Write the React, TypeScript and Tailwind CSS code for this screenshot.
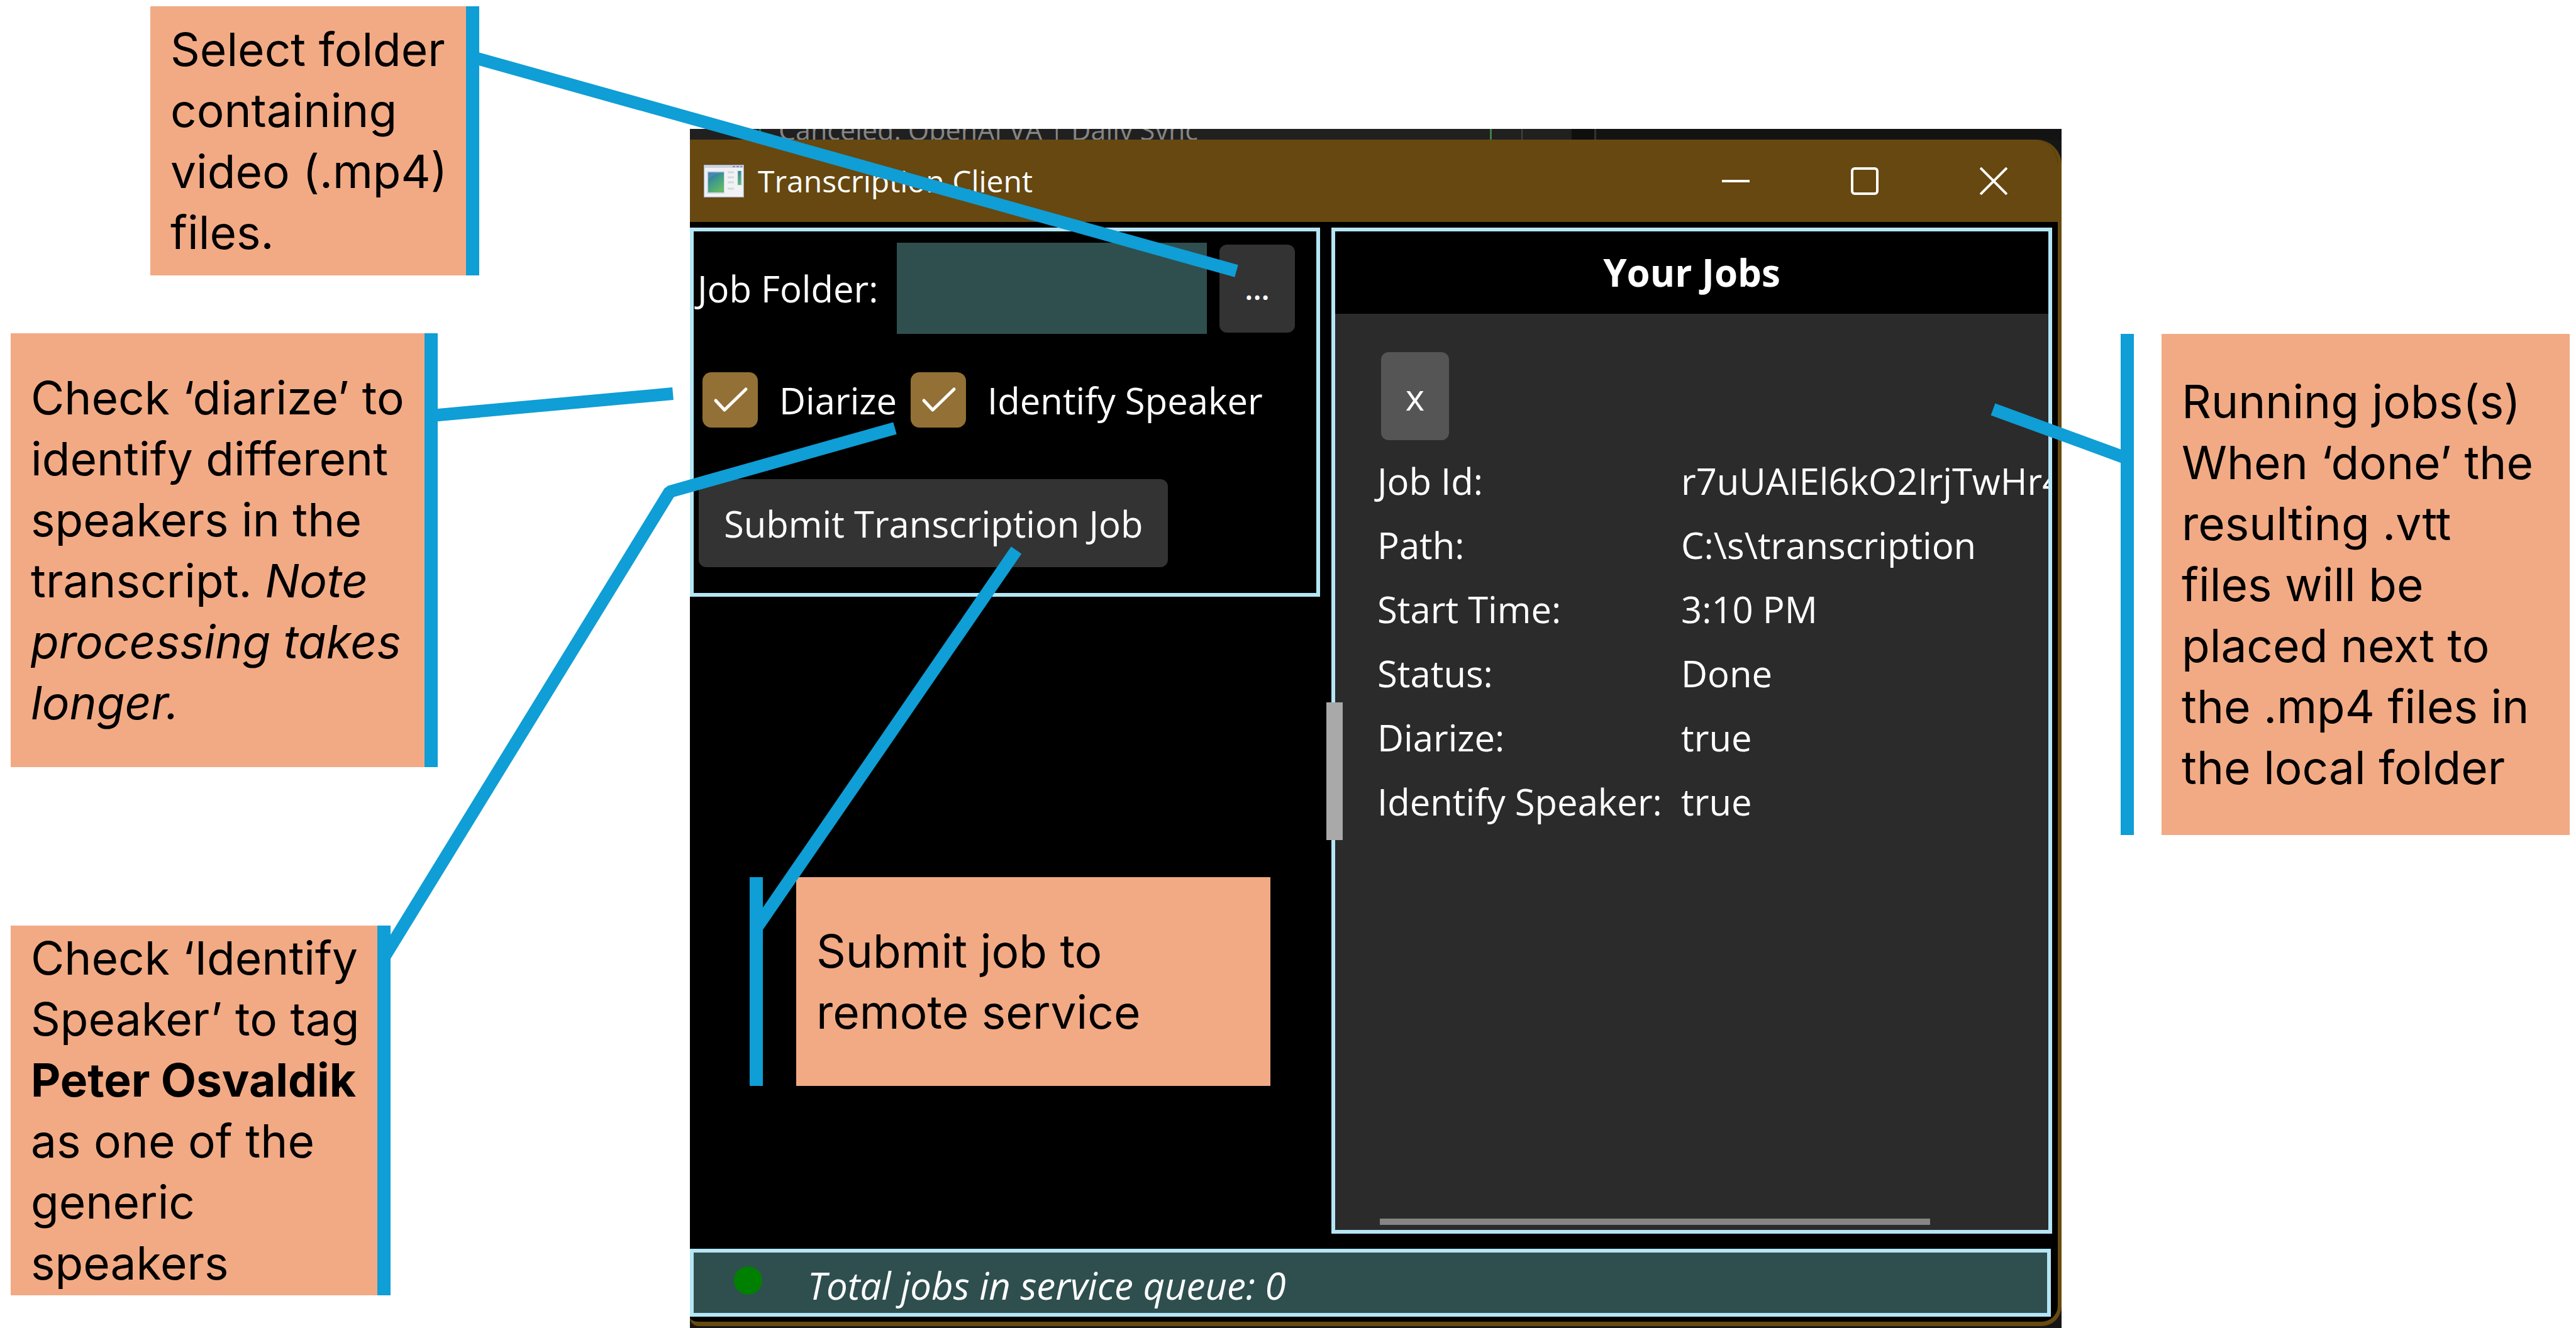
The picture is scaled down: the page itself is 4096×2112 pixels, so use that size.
import type { ReactNode } from "react";

const jobFields: [string, string][] = [
  ["Job Id:", "r7uUAIEl6kO2IrjTwHr4"],
  ["Path:", "C:\\s\\transcription"],
  ["Start Time:", "3:10 PM"],
  ["Status:", "Done"],
  ["Diarize:", "true"],
  ["Identify Speaker:", "true"],
];

function Note({ className, children }: { className: string; children: ReactNode }) {
  return (
    <p
      className={`bg-[#f2aa84] pl-[32px] font-['Inter',sans-serif] text-[73px] leading-[97px] whitespace-nowrap text-black ${className}`}
    >
      {children}
    </p>
  );
}

function Bar() {
  return <div className="w-[21px] shrink-0 bg-[#0f9ed5]" />;
}

function AppIcon() {
  return (
    <svg viewBox="0 0 64 52" className="h-[52px] w-[64px]" aria-hidden="true">
      <defs>
        <linearGradient id="pane" x1="0" y1="0" x2="0.6" y2="1">
          <stop offset="0" stopColor="#2f6aa8" />
          <stop offset="0.5" stopColor="#3f9a8c" />
          <stop offset="1" stopColor="#62b866" />
        </linearGradient>
      </defs>
      <rect x="0.5" y="0.5" width="63" height="51" fill="#f1f2f4" stroke="#a9b3c8" strokeWidth="1.5" />
      <rect x="1" y="1" width="62" height="4" fill="#cdd3e2" />
      <path d="M46 3h4M52 3h4M58 3h3" stroke="#7f8bb0" strokeWidth="2" />
      <rect x="5" y="10" width="28" height="36" fill="#cfd8e2" />
      <rect x="7" y="12" width="25" height="32" fill="url(#pane)" />
      <path d="M7 24C12 17 22 13 32 13V12H7Z" fill="#5b8fc4" opacity="0.6" />
      <path d="M38 12h10M38 20h10M38 28h10M38 38h10" stroke="#d5d8dc" strokeWidth="3" />
      <rect x="53" y="9" width="8" height="24" fill="#d8e0e4" />
      <rect x="54.5" y="10" width="5" height="22" fill="url(#pane)" />
    </svg>
  );
}

function WindowButton({ label, children }: { label: string; children: ReactNode }) {
  return (
    <button type="button" aria-label={label} className="flex h-full w-[205px] items-center justify-center">
      <svg viewBox="0 0 44 44" className="size-[44px]" fill="none" stroke="#ffffff" strokeWidth="4">
        {children}
      </svg>
    </button>
  );
}

function CheckOption({ id, label }: { id: string; label: string }) {
  return (
    <div className="flex items-center gap-[34px]">
      <span className="grid size-[88px]">
        <input
          id={id}
          type="checkbox"
          defaultChecked
          className="col-start-1 row-start-1 size-[88px] appearance-none rounded-[14px] bg-[#937035]"
        />
        <svg
          viewBox="0 0 88 88"
          className="pointer-events-none col-start-1 row-start-1 size-[88px]"
          fill="none"
          stroke="#ffffff"
          strokeWidth="5"
          strokeLinecap="round"
          strokeLinejoin="round"
        >
          <path d="M21 45L35 60L69 27" />
        </svg>
      </span>
      <label htmlFor={id}>{label}</label>
    </div>
  );
}

function SubmitPanel() {
  return (
    <form className="self-start border-6 border-[#b5e6f5] bg-black pt-[18px] pb-[41px]">
      <div className="flex items-center pr-[34px] pl-[6px]">
        <label htmlFor="folder" className="w-[317px] shrink-0">
          Job Folder:
        </label>
        <input id="folder" type="text" className="h-[145px] w-0 min-w-0 flex-1 bg-[#2f4f4f] px-4" />
        <button
          type="button"
          aria-label="Choose folder"
          className="ml-5 h-[140px] w-[120px] shrink-0 rounded-xl bg-[#333333] text-[48px] font-semibold"
        >
          ...
        </button>
      </div>
      <div className="mt-[61px] flex items-center gap-[22px] pl-[14px] whitespace-nowrap">
        <CheckOption id="diarize" label="Diarize" />
        <CheckOption id="identify" label="Identify Speaker" />
      </div>
      <button type="button" className="mt-[82px] ml-2 h-[140px] rounded-xl bg-[#333333] px-[40px]">
        Submit Transcription Job
      </button>
    </form>
  );
}

function JobsPanel() {
  return (
    <section className="relative flex flex-col border-6 border-[#b5e6f5] bg-[#2b2b2b]">
      <h2 className="bg-black text-center text-[60px] leading-[131px] font-bold">Your Jobs</h2>
      <div className="flex flex-1 flex-col overflow-hidden pt-[61px] pl-[67px]">
        <button
          type="button"
          aria-label="Remove job"
          className="ml-1.5 h-[140px] w-[108px] rounded-xl bg-[#555555]"
        >
          x
        </button>
        <table className="mt-[13px] w-full table-fixed border-collapse text-left">
          <tbody>
            {jobFields.map(([name, value]) => (
              <tr key={name} className="h-[102px]">
                <th scope="row" className="w-[483px] p-0 font-normal whitespace-nowrap">
                  {name}
                </th>
                <td className="p-0 whitespace-nowrap">{value}</td>
              </tr>
            ))}
          </tbody>
        </table>
        <div className="mt-auto mb-2 ml-1 h-[10px] w-[82%] bg-[#858585]" />
      </div>
      <div
        role="separator"
        aria-orientation="vertical"
        className="absolute top-[749px] -left-[14px] h-[219px] w-[26px] bg-[#a9a9a9]"
      />
    </section>
  );
}

function ClientWindow() {
  return (
    <main className="relative mt-[205px] flex flex-col bg-[#161616] pb-[3px] font-['Open_Sans',sans-serif] text-[58px] text-white">
      <div className="flex h-[17px] items-end overflow-hidden bg-[#202020] text-[43px] leading-[17px] text-[#858585]">
        <div className="ml-[110px] h-full w-[3px] bg-[#2f6b3a]" />
        <span className="-mb-[1px] ml-[28px] flex-1 whitespace-nowrap">
          <span className="inline-block leading-[32px]">Canceled: OpenAI VA | Daily Sync</span>
        </span>
        <div className="flex h-full w-[909px]">
          <div className="h-full w-[3px] bg-[#3f7f45]" />
          <div className="ml-[47px] h-full w-[2px] bg-[#444444]" />
          <div className="ml-[78px] h-full w-[36px] bg-[#0f0f0f]" />
          <div className="h-full w-[3px] bg-[#333333]" />
          <div className="h-full flex-1 bg-[#131313]" />
        </div>
      </div>
      <div className="flex flex-1 flex-col overflow-hidden rounded-tr-[40px] rounded-br-[32px] rounded-bl-[14px] border-r-6 border-b-7 border-[#684a10] bg-black">
        <header className="flex h-[131px] items-center bg-[#664810] pl-[22px]">
          <AppIcon />
          <h1 className="ml-[22px] flex-1 text-[48px]">Transcription Client</h1>
          <WindowButton label="Minimize">
            <path d="M0 22H44" />
          </WindowButton>
          <WindowButton label="Maximize">
            <rect x="2" y="2" width="40" height="40" rx="4" />
          </WindowButton>
          <WindowButton label="Close">
            <path d="M1 1L43 43M43 1L1 43" />
          </WindowButton>
        </header>
        <div className="grid flex-1 grid-cols-[minmax(0,1002fr)_minmax(0,1146fr)] gap-[18px] pt-[9px] pr-[9px]">
          <SubmitPanel />
          <JobsPanel />
        </div>
        <footer className="mt-6 mr-[11px] mb-2 flex h-[108px] items-start border-6 border-[#b5e6f5] bg-[#2f4f4f] pt-[22px] pl-[64px]">
          <span className="size-[45px] rounded-full bg-[#008000]" />
          <span className="ml-[72px] text-[60px] leading-[60px] italic">Total jobs in service queue: 0</span>
        </footer>
      </div>
      <div className="absolute top-[1190px] left-[95px] flex">
        <Bar />
        <Note className="ml-[53px] w-[754px] py-[69px]">
          Submit job to
          <br />
          remote service
        </Note>
      </div>
    </main>
  );
}

export default function App() {
  return (
    <div className="relative grid min-h-screen grid-cols-[1097fr_2181fr_818fr] bg-white">
      <aside className="flex flex-col items-start pt-[10px] pl-[17px]">
        <div className="ml-[222px] flex">
          <Note className="w-[502px] py-[20px]">
            Select folder
            <br />
            containing
            <br />
            video (.mp4)
            <br />
            files.
          </Note>
          <Bar />
        </div>
        <div className="mt-[92px] flex">
          <Note className="w-[658px] py-[54px]">
            Check ‘diarize’ to
            <br />
            identify different
            <br />
            speakers in the
            <br />
            transcript. <em>Note</em>
            <br />
            <em>processing takes</em>
            <br />
            <em>longer.</em>
          </Note>
          <Bar />
        </div>
        <div className="mt-[252px] flex">
          <Note className="w-[583px] py-[3px]">
            Check ‘Identify
            <br />
            Speaker’ to tag
            <br />
            <strong>Peter Osvaldik</strong>
            <br />
            as one of the
            <br />
            generic
            <br />
            speakers
          </Note>
          <Bar />
        </div>
      </aside>
      <ClientWindow />
      <aside className="flex items-start pt-[531px] pr-[10px] pl-[94px]">
        <div className="flex flex-1">
          <Bar />
          <Note className="ml-[44px] flex-1 py-[59px]">
            Running jobs(s)
            <br />
            When ‘done’ the
            <br />
            resulting .vtt
            <br />
            files will be
            <br />
            placed next to
            <br />
            the .mp4 files in
            <br />
            the local folder
          </Note>
        </div>
      </aside>
      <svg
        viewBox="0 0 4096 2112"
        preserveAspectRatio="none"
        className="pointer-events-none absolute inset-0 size-full"
        fill="none"
        stroke="#0f9ed5"
        strokeWidth="20"
        strokeLinejoin="bevel"
        aria-hidden="true"
      >
        <path d="M752 91L1966 431" />
        <path d="M686 661L1070 626" />
        <path d="M611 1522L1065 782L1423 681" />
        <path d="M1202 1477L1616 875" />
        <path d="M3169 651L3382 729" />
      </svg>
    </div>
  );
}
